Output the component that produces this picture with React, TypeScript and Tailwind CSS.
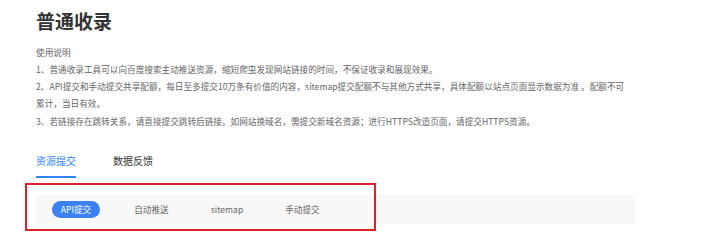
import React from "react";

export default function App() {
  const font = { fontFamily: '"Noto Sans CJK SC", "Noto Sans", sans-serif' };
  return (
    <div className="relative w-[720px] h-[244px] bg-white overflow-hidden" style={font}>
      <div className="pl-[36px] pt-[8px]">
        <h1 className="text-[19px] leading-[26px] font-bold text-[#333333]">普通收录</h1>
        <div className="mt-[9.5px] text-[8.65px] leading-[17.3px] text-[#666666]">
          <p>使用说明</p>
          <p>1、普通收录工具可以向百度搜索主动推送资源，缩短爬虫发现网站链接的时间，不保证收录和展现效果。</p>
          <p>
            2、API提交和手动提交共享配额，每日至多提交10万条有价值的内容，sitemap提交配额不与其他方式共享，具体配额以站点页面显示数据为准 。配额不可
            <br />
            累计，当日有效。
          </p>
          <p>3、若链接存在跳转关系，请直接提交跳转后链接。如网站换域名，需提交新域名资源；进行HTTPS改造页面，请提交HTTPS资源。</p>
        </div>
        <div className="mt-[24px] flex gap-[37px] text-[10px] leading-[14px]">
          <div className="pb-[8px] border-b-2 border-[#3385ff] text-[#3385ff]">资源提交</div>
          <div className="pb-[8px] text-[#333333]">数据反馈</div>
        </div>
        <div className="mt-[17px] w-[599px] h-[29px] bg-[#f8f8f8] flex items-center pl-[16px] gap-[27.5px] text-[8.65px]">
          <div className="w-[48px] h-[17px] rounded-full bg-[#3c82f5] text-white flex items-center justify-center">API提交</div>
          <div className="w-[48px] text-center text-[#666666]">自动推送</div>
          <div className="w-[48px] text-center text-[#666666]">sitemap</div>
          <div className="w-[48px] text-center text-[#666666]">手动提交</div>
        </div>
      </div>
      <div className="absolute left-[25px] top-[183px] w-[351px] h-[48px] border-2 border-[#e0202a]"></div>
    </div>
  );
}
